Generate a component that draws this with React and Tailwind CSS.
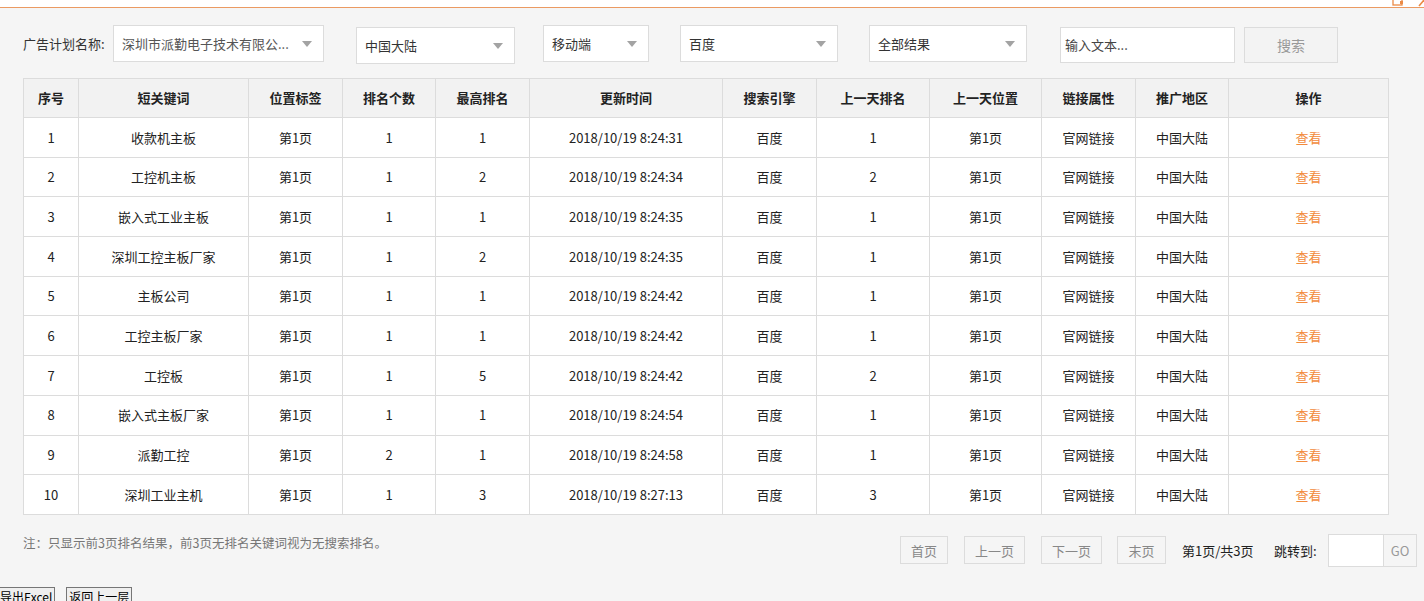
import React from 'react';

const rows = [
  ['1', '收款机主板', '第1页', '1', '1', '2018/10/19 8:24:31', '百度', '1'],
  ['2', '工控机主板', '第1页', '1', '2', '2018/10/19 8:24:34', '百度', '2'],
  ['3', '嵌入式工业主板', '第1页', '1', '1', '2018/10/19 8:24:35', '百度', '1'],
  ['4', '深圳工控主板厂家', '第1页', '1', '2', '2018/10/19 8:24:35', '百度', '1'],
  ['5', '主板公司', '第1页', '1', '1', '2018/10/19 8:24:42', '百度', '1'],
  ['6', '工控主板厂家', '第1页', '1', '1', '2018/10/19 8:24:42', '百度', '1'],
  ['7', '工控板', '第1页', '1', '5', '2018/10/19 8:24:42', '百度', '2'],
  ['8', '嵌入式主板厂家', '第1页', '1', '1', '2018/10/19 8:24:54', '百度', '1'],
  ['9', '派勤工控', '第1页', '2', '1', '2018/10/19 8:24:58', '百度', '1'],
  ['10', '深圳工业主机', '第1页', '1', '3', '2018/10/19 8:27:13', '百度', '3'],
];

const headers = ['序号', '短关键词', '位置标签', '排名个数', '最高排名', '更新时间', '搜索引擎', '上一天排名', '上一天位置', '链接属性', '推广地区', '操作'];
const widths = [55, 170, 94, 93, 94, 193, 94, 113, 112, 94, 93, 160];

function Select({ text, className, textClass = 'text-[#333]' }) {
  return (
    <div className={`h-[37px] bg-white border border-[#dcdcdc] flex items-center justify-between pl-[8px] pr-[11px] ${className}`}>
      <span className={`text-[13px] leading-[20px] whitespace-nowrap ${textClass}`}>{text}</span>
      <svg width="10" height="6" viewBox="0 0 10 6" className="shrink-0 ml-2">
        <path d="M0 0 L10 0 L5 6 Z" fill="#a3a3a3" />
      </svg>
    </div>
  );
}

function PageBtn({ children, className }) {
  return (
    <div className={`h-[28px] border border-[#dcdcdc] flex items-center justify-center text-[13px] text-[#888] ${className}`}>
      {children}
    </div>
  );
}

export default function App() {
  return (
    <div className="min-h-screen bg-[#f5f5f5] text-[#333]" style={{ fontFamily: '"Noto Sans CJK SC", "Noto Sans", sans-serif' }}>
      {/* top strip */}
      <div className="relative h-[8px] bg-white border-b border-[#eb9a62]">
        <svg width="12" height="7" viewBox="0 0 12 7" className="absolute right-[20px] top-0">
          <rect x="1" y="-4" width="9" height="9" fill="none" stroke="#eb8a45" strokeWidth="1.3" />
          <rect x="8" y="1" width="3" height="3" fill="#eb8a45" />
        </svg>
        <svg width="6" height="7" viewBox="0 0 6 7" className="absolute right-0 top-0">
          <path d="M1 6 L6 0" stroke="#eb8a45" strokeWidth="1.6" />
        </svg>
      </div>

      {/* filters */}
      <div className="flex items-start pl-[23px] pt-[17px]">
        <div className="w-[90px] h-[37px] flex items-center text-[13px] text-[#333]">广告计划名称:</div>
        <Select text="深圳市派勤电子技术有限公..." className="w-[211px]" textClass="text-[#555]" />
        <Select text="中国大陆" className="w-[159px] ml-[32px] mt-[2px]" />
        <Select text="移动端" className="w-[106px] ml-[28px]" />
        <Select text="百度" className="w-[158px] ml-[31px]" />
        <Select text="全部结果" className="w-[158px] ml-[31px]" />
        <div className="w-[175px] h-[36px] ml-[33px] mt-[2px] bg-white border border-[#dcdcdc] flex items-center pl-[4px] text-[13px] text-[#444]">
          输入文本...
        </div>
        <div className="w-[94px] h-[36px] ml-[9px] mt-[2px] border border-[#dcdcdc] bg-[#f3f3f3] flex items-center justify-center text-[14px] text-[#999]">
          搜索
        </div>
      </div>

      {/* table */}
      <div className="pl-[23px] mt-[14px]">
        <table className="border-collapse table-fixed w-[1366px] bg-white text-[13px]">
          <colgroup>
            {widths.map((w, i) => (
              <col key={i} style={{ width: w }} />
            ))}
          </colgroup>
          <thead>
            <tr className="h-[39px] bg-[#f2f2f2]">
              {headers.map((h) => (
                <th key={h} className="border border-[#dcdcdc] font-bold text-[13px] text-[#222] p-0">{h}</th>
              ))}
            </tr>
          </thead>
          <tbody>
            {rows.map((r) => (
              <tr key={r[0]} className="h-[39.7px]">
                {r.map((c, i) => (
                  <td key={i} className="border border-[#dcdcdc] text-center p-0 text-[#222]">{c}</td>
                ))}
                <td className="border border-[#dcdcdc] text-center p-0 text-[#222]">第1页</td>
                <td className="border border-[#dcdcdc] text-center p-0 text-[#222]">官网链接</td>
                <td className="border border-[#dcdcdc] text-center p-0 text-[#222]">中国大陆</td>
                <td className="border border-[#dcdcdc] text-center p-0 text-[#f28b3c]">查看</td>
              </tr>
            ))}
          </tbody>
        </table>
      </div>

      {/* note + pagination */}
      <div className="flex items-start pl-[23px] mt-[19px]">
        <div className="text-[12.5px] text-[#777] leading-[18px]">注：只显示前3页排名结果，前3页无排名关键词视为无搜索排名。</div>
        <div className="flex items-center ml-auto mr-[7px]">
          <PageBtn className="w-[48px]">首页</PageBtn>
          <PageBtn className="w-[61px] ml-[16px]">上一页</PageBtn>
          <PageBtn className="w-[61px] ml-[16px]">下一页</PageBtn>
          <PageBtn className="w-[49px] ml-[15px]">末页</PageBtn>
          <span className="ml-[16px] w-[76px] text-[13px] text-[#222] whitespace-nowrap">第1页/共3页</span>
          <span className="ml-[16px] w-[46px] text-[13px] text-[#222] whitespace-nowrap">跳转到:</span>
          <div className="ml-[8px] flex h-[33px]">
            <div className="w-[56px] bg-white border border-[#dcdcdc]" />
            <div className="w-[33px] border border-l-0 border-[#dcdcdc] flex items-center justify-center text-[13px] text-[#999]">GO</div>
          </div>
        </div>
      </div>

      {/* bottom buttons */}
      <div className="flex items-start mt-[20px] ml-[-3px]">
        <button className="h-[21px] px-[2px] bg-[#efefef] border border-[#767676] text-[12px] leading-none text-black">导出Excel</button>
        <button className="h-[21px] ml-[11px] px-[2px] bg-[#efefef] border border-[#767676] text-[12px] leading-none text-black">返回上一层</button>
      </div>
    </div>
  );
}
